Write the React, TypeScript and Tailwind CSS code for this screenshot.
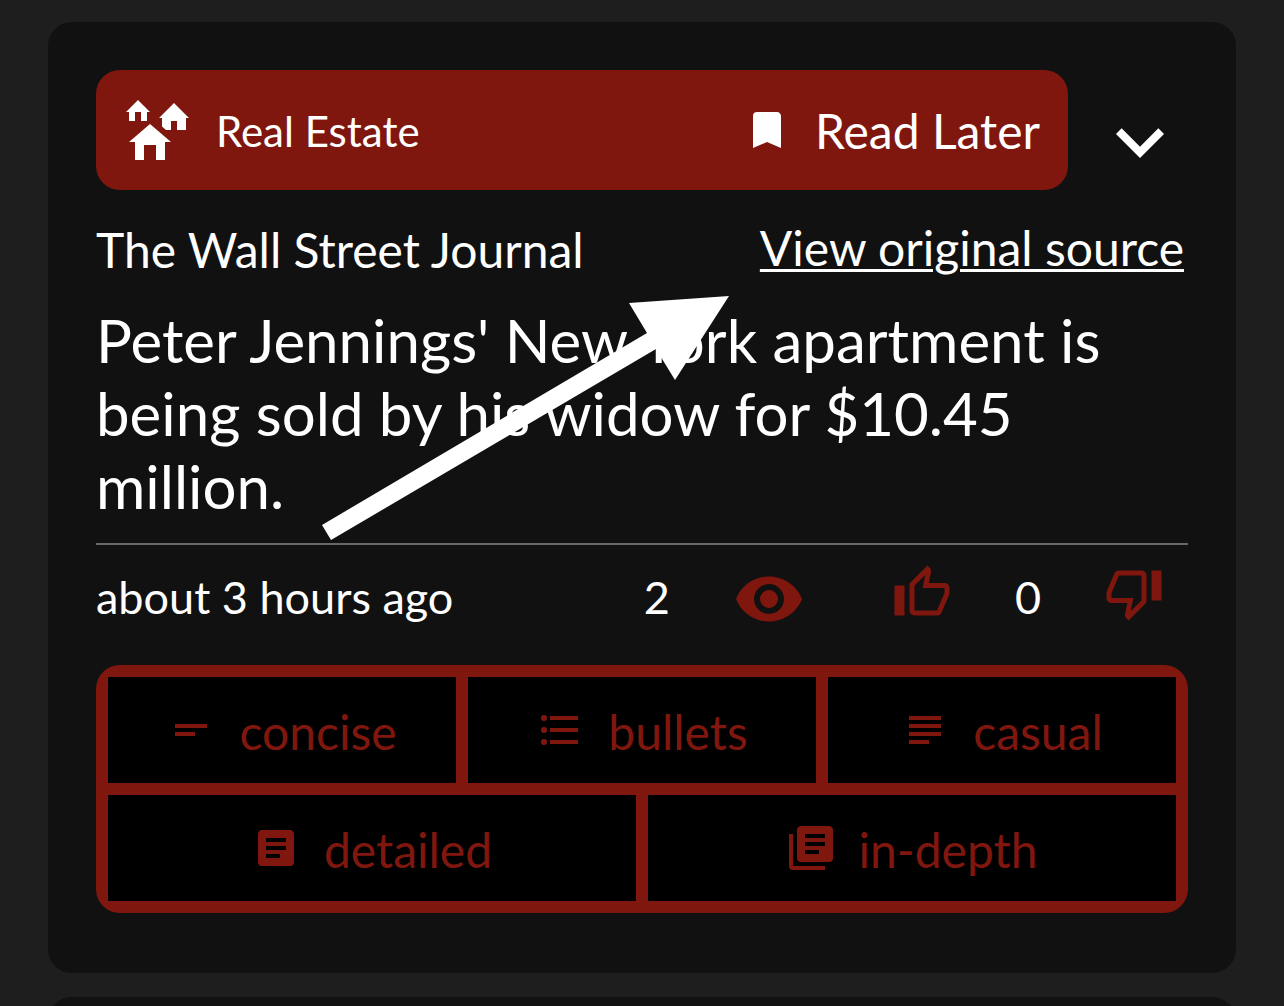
import type { ReactNode } from 'react';

const icons = {
  homeGroup:
    'M17,16H15V22H12V17H8V22H5V16H3L10,10L17,16M6,2L10,6H9V9H7V6H5V9H3V6H2L6,2M18,3L23,8H22V12H19V9H17V12H15.34L14,10.87V8H13L18,3Z',
  bookmark: 'M17,3H7A2,2 0 0,0 5,5V21L12,18L19,21V5C19,3.89 18.1,3 17,3Z',
  chevronDown: 'M7.41,8.58L12,13.17L16.59,8.58L18,10L12,16L6,10L7.41,8.58Z',
  eye: 'M12,9A3,3 0 0,0 9,12A3,3 0 0,0 12,15A3,3 0 0,0 15,12A3,3 0 0,0 12,9M12,17A5,5 0 0,1 7,12A5,5 0 0,1 12,7A5,5 0 0,1 17,12A5,5 0 0,1 12,17M12,4.5C7,4.5 2.73,7.61 1,12C2.73,16.39 7,19.5 12,19.5C17,19.5 21.27,16.39 23,12C21.27,7.61 17,4.5 12,4.5Z',
  thumbUp:
    'M5,9V21H1V9H5M9,21A2,2 0 0,1 7,19V9C7,8.45 7.22,7.95 7.59,7.59L14.17,1L15.23,2.06C15.5,2.33 15.67,2.7 15.67,3.11L15.64,3.43L14.69,8H21C22.11,8 23,8.9 23,10V12C23,12.26 22.95,12.5 22.86,12.73L19.84,19.78C19.54,20.5 18.83,21 18,21H9M9,19H18.03L21,12V10H12.21L13.34,4.68L9,9.03V19Z',
  thumbDown:
    'M19,15V3H23V15H19M15,3A2,2 0 0,1 17,5V15C17,15.55 16.78,16.05 16.41,16.41L9.83,23L8.77,21.94C8.5,21.67 8.33,21.3 8.33,20.88L8.36,20.57L9.31,16H3C1.89,16 1,15.1 1,14V12C1,11.74 1.05,11.5 1.14,11.27L4.16,4.22C4.46,3.5 5.17,3 6,3H15M15,5H5.97L3,12V14H11.78L10.65,19.32L15,14.97V5Z',
  textShort: 'M4,9H20V11H4V9M4,13H14V15H4V13Z',
  bullets:
    'M7,5H21V7H7V5M7,13V11H21V13H7M4,4.5A1.5,1.5 0 0,1 5.5,6A1.5,1.5 0 0,1 4,7.5A1.5,1.5 0 0,1 2.5,6A1.5,1.5 0 0,1 4,4.5M4,10.5A1.5,1.5 0 0,1 5.5,12A1.5,1.5 0 0,1 4,13.5A1.5,1.5 0 0,1 2.5,12A1.5,1.5 0 0,1 4,10.5M7,19V17H21V19H7M4,16.5A1.5,1.5 0 0,1 5.5,18A1.5,1.5 0 0,1 4,19.5A1.5,1.5 0 0,1 2.5,18A1.5,1.5 0 0,1 4,16.5Z',
  text: 'M4,5H20V7H4V5M4,9H20V11H4V9M4,13H20V15H4V13M4,17H14V19H4V17Z',
  textBox:
    'M14,17H7V15H14M17,13H7V11H17M17,9H7V7H17M19,3H5C3.89,3 3,3.89 3,5V19A2,2 0 0,0 5,21H19A2,2 0 0,0 21,19V5C21,3.89 20.1,3 19,3Z',
  textBoxMultiple:
    'M16,15H9V13H16M19,11H9V9H19M19,7H9V5H19M21,1H7C5.89,1 5,1.89 5,3V17A2,2 0 0,0 7,19H21A2,2 0 0,0 23,17V3C23,1.89 22.1,1 21,1M3,5V21H19V23H3A2,2 0 0,1 1,21V5H3Z',
};

function Icon({ path, className }: { path: string; className: string }) {
  return (
    <svg viewBox="0 0 24 24" fill="currentColor" aria-hidden="true" className={`shrink-0 ${className}`}>
      <path d={path} />
    </svg>
  );
}

function StyleButton({ icon, children }: { icon: string; children: ReactNode }) {
  return (
    <button
      type="button"
      className="flex h-[106px] flex-1 basis-0 items-center justify-center gap-6 bg-black text-5xl text-[#80170f]"
    >
      <Icon path={icon} className="size-12" />
      <span className="mt-1">{children}</span>
    </button>
  );
}

function Arrow() {
  return (
    <svg
      viewBox="0 0 408 246"
      width="408"
      height="246"
      fill="#fff"
      aria-hidden="true"
      className="pointer-events-none absolute -top-2 left-[226px]"
    >
      <path d="M0,229L325,37L307,7L407,0L353,84L334,53L9,244Z" />
    </svg>
  );
}

export default function App() {
  return (
    <main className="flex h-screen flex-col gap-6 overflow-hidden bg-[#1e1e1e] px-12 pt-[22px] font-[Lato,sans-serif] text-white">
      <article className="shrink-0 rounded-3xl bg-[#111] px-12 pt-12 pb-[60px]">
        <header className="flex items-center gap-6">
          <div className="flex h-[120px] flex-1 items-center justify-between rounded-3xl bg-[#80170f] pr-7 pl-6">
            <div className="flex items-center gap-6">
              <Icon path={icons.homeGroup} className="size-18" />
              <span className="mt-0.5 text-[42px] leading-[60px]">Real Estate</span>
            </div>
            <button type="button" className="flex items-center gap-6 text-5xl">
              <Icon path={icons.bookmark} className="size-12" />
              <span className="mt-0.5">Read Later</span>
            </button>
          </div>
          <button type="button" aria-label="Collapse" className="mt-6">
            <Icon path={icons.chevronDown} className="size-24" />
          </button>
        </header>

        <div className="mt-[30px] flex items-start justify-between text-5xl leading-[60px]">
          <span>The Wall Street Journal</span>
          <a href="#source" className="mr-1 leading-14 underline decoration-3 underline-offset-3">
            View original source
          </a>
        </div>

        <div className="relative mt-6">
          <h1 className="text-[60px] leading-[73px]">
            Peter Jennings' New York apartment is being sold by his widow for $10.45 million.
          </h1>
          <Arrow />
        </div>

        <hr className="mt-5 border-t-2 border-[#68666b]" />

        <div className="mt-[18px] flex h-18 items-center text-[45px] leading-[60px]">
          <span className="mb-1 flex-1">about 3 hours ago</span>
          <span className="mb-1">2</span>
          <Icon path={icons.eye} className="ml-[63px] size-18 text-[#80170f]" />
          <button type="button" aria-label="Like" className="mb-3 ml-[87px] text-[#80170f]">
            <Icon path={icons.thumbUp} className="size-15" />
          </button>
          <span className="mb-1 ml-[63px]">0</span>
          <button type="button" aria-label="Dislike" className="mr-6 mb-3 ml-[63px] text-[#80170f]">
            <Icon path={icons.thumbDown} className="size-15" />
          </button>
        </div>

        <div className="mt-[30px] flex flex-col gap-3 rounded-3xl bg-[#80170f] p-3">
          <div className="flex gap-3">
            <StyleButton icon={icons.textShort}>concise</StyleButton>
            <StyleButton icon={icons.bullets}>bullets</StyleButton>
            <StyleButton icon={icons.text}>casual</StyleButton>
          </div>
          <div className="flex gap-3">
            <StyleButton icon={icons.textBox}>detailed</StyleButton>
            <StyleButton icon={icons.textBoxMultiple}>in-depth</StyleButton>
          </div>
        </div>
      </article>
      <article className="h-60 shrink-0 rounded-3xl bg-[#111]" />
    </main>
  );
}
